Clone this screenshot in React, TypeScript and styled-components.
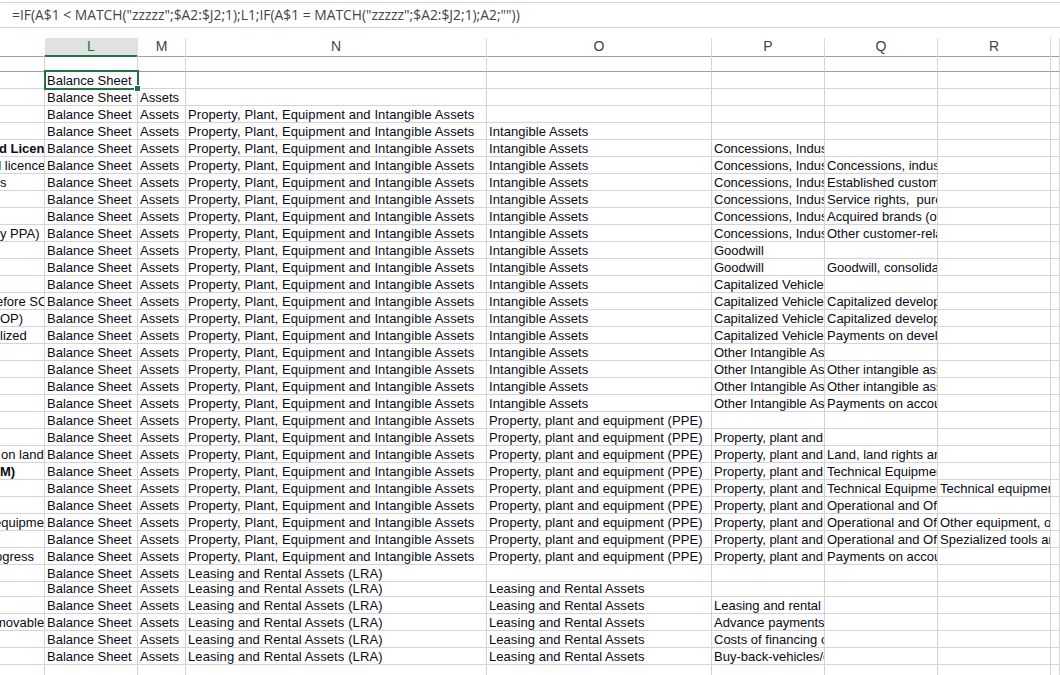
import styled, { createGlobalStyle } from "styled-components";

const COLUMNS = "45px 93px 48px 301px 225px 113px 113px 113px 1fr";

const BS = "Balance Sheet";
const AS = "Assets";
const PPE = "Property, Plant, Equipment and Intangible Assets";
const LRA = "Leasing and Rental Assets (LRA)";
const IA = "Intangible Assets";
const PP = "Property, plant and equipment (PPE)";
const LR = "Leasing and Rental Assets";
const CON = "Concessions, Industrial Rights";
const CAP = "Capitalized Vehicle Development";
const OIA = "Other Intangible Assets";
const PPS = "Property, plant and equipment";
const OPS = "Operational and Office Equipment";
const TEC = "Technical Equipment and Machinery";

interface RowData {
    left?: string;
    shift?: number; // left column text starts outside of the visible part
    bold?: boolean;
    m?: string;
    n?: string;
    o?: string;
    p?: string;
    q?: string;
    r?: string;
    short?: boolean;
}

const rows: RowData[] = [
    {},
    { m: AS },
    { m: AS, n: PPE },
    { m: AS, n: PPE, o: IA },
    { left: "d Licen", shift: -1, bold: true, m: AS, n: PPE, o: IA, p: CON },
    { left: "d licence", shift: -6, m: AS, n: PPE, o: IA, p: CON, q: "Concessions, industrial" },
    { left: "s", shift: 0, m: AS, n: PPE, o: IA, p: CON, q: "Established customer" },
    { m: AS, n: PPE, o: IA, p: CON, q: "Service rights,  purchased" },
    { m: AS, n: PPE, o: IA, p: CON, q: "Acquired brands (other)" },
    { left: "y PPA)", m: AS, n: PPE, o: IA, p: CON, q: "Other customer-related" },
    { m: AS, n: PPE, o: IA, p: "Goodwill" },
    { m: AS, n: PPE, o: IA, p: "Goodwill", q: "Goodwill, consolidated" },
    { m: AS, n: PPE, o: IA, p: CAP },
    { left: "efore SOP", shift: -4, m: AS, n: PPE, o: IA, p: CAP, q: "Capitalized development" },
    { left: "OP)", shift: 0, m: AS, n: PPE, o: IA, p: CAP, q: "Capitalized development" },
    { left: "lized", shift: 0, m: AS, n: PPE, o: IA, p: CAP, q: "Payments on development" },
    { m: AS, n: PPE, o: IA, p: OIA },
    { m: AS, n: PPE, o: IA, p: OIA, q: "Other intangible assets" },
    { m: AS, n: PPE, o: IA, p: OIA, q: "Other intangible assets" },
    { m: AS, n: PPE, o: IA, p: OIA, q: "Payments on account" },
    { m: AS, n: PPE, o: PP },
    { m: AS, n: PPE, o: PP, p: PPS },
    { left: "on land", shift: 1, m: AS, n: PPE, o: PP, p: PPS, q: "Land, land rights and" },
    { left: "M)", bold: true, m: AS, n: PPE, o: PP, p: PPS, q: TEC },
    { m: AS, n: PPE, o: PP, p: PPS, q: TEC, r: "Technical equipment and" },
    { m: AS, n: PPE, o: PP, p: PPS, q: OPS },
    { left: "equipme", shift: -6, m: AS, n: PPE, o: PP, p: PPS, q: OPS, r: "Other equipment, office" },
    { m: AS, n: PPE, o: PP, p: PPS, q: OPS, r: "Spezialized tools and" },
    { left: "ogress", shift: -5, m: AS, n: PPE, o: PP, p: PPS, q: "Payments on account" },
    { m: AS, n: LRA },
    { m: AS, n: LRA, o: LR, short: true },
    { m: AS, n: LRA, o: LR, p: "Leasing and rental" },
    { left: "movable", shift: -5, m: AS, n: LRA, o: LR, p: "Advance payments on" },
    { m: AS, n: LRA, o: LR, p: "Costs of financing of" },
    { m: AS, n: LRA, o: LR, p: "Buy-back-vehicles/other" },
    {},
];

const headers = ["", "L", "M", "N", "O", "P", "Q", "R", ""];

const App = () => {
    return (
        <Sheet>
            <GlobalStyle />
            <FormulaBar>=IF(A$1 &lt; MATCH("zzzzz";$A2:$J2;1);L1;IF(A$1 = MATCH("zzzzz";$A2:$J2;1);A2;""))</FormulaBar>
            <HeaderRow>
                {headers.map((label, index) => (
                    <HeaderCell key={index} $active={label === "L"} $plain={index === 0}>
                        {label}
                    </HeaderCell>
                ))}
            </HeaderRow>
            <FrozenRow>
                {headers.map((_, index) => (
                    <FrozenCell key={index} />
                ))}
            </FrozenRow>
            {rows.map((row, index) => {
                const isLast = index === rows.length - 1;
                return (
                    <Row key={index} $short={row.short}>
                        <LeftCell $bold={row.bold} $shift={row.shift ?? 0}>
                            {row.left}
                        </LeftCell>
                        {index === 0 ? (
                            <SelectedCell>
                                {BS}
                                <FillHandle />
                            </SelectedCell>
                        ) : (
                            <Cell $short={row.short}>{isLast ? "" : BS}</Cell>
                        )}
                        <Cell $short={row.short}>{row.m}</Cell>
                        <Cell $short={row.short} $spread={0.1}>{row.n}</Cell>
                        <Cell $short={row.short} $spread={0.06}>{row.o}</Cell>
                        <Cell>{row.p}</Cell>
                        <Cell>{row.q}</Cell>
                        <Cell>{row.r}</Cell>
                        <Cell />
                    </Row>
                );
            })}
        </Sheet>
    );
};

export default App;

// Styled Components
const GlobalStyle = createGlobalStyle`
    html, body {
        margin: 0;
        padding: 0;
        background: #fff;
        overflow: hidden;
    }
`;

const Sheet = styled.div`
    width: 1060px;
    height: 675px;
    overflow: hidden;
    background: #fff;
    padding-top: 2px;
    box-sizing: border-box;
    font-family: "Liberation Sans", Arial, sans-serif;
    font-size: 13px;
    color: #0a0a14;
`;

const FormulaBar = styled.div`
    height: 26px;
    box-sizing: border-box;
    border-top: 1px solid #d4d4d4;
    border-bottom: 1px solid #d4d4d4;
    margin-bottom: 10px;
    padding-left: 12px;
    line-height: 23px;
    font-family: "Open Sans", sans-serif;
    font-size: 13.85px;
    color: #444;
    white-space: nowrap;
`;

const HeaderRow = styled.div`
    display: grid;
    grid-template-columns: ${COLUMNS};
    height: 17px;
`;

const HeaderCell = styled.div<{ $active?: boolean; $plain?: boolean }>`
    box-sizing: border-box;
    border-right: 1px solid ${({ $active, $plain }) => ($active || $plain ? "transparent" : "#dcdcdc")};
    border-bottom: ${({ $active }) => ($active ? "2px solid #217346" : "1px solid #9f9f9f")};
    background: ${({ $active }) => ($active ? "#e1e1e1" : "#fff")};
    color: ${({ $active }) => ($active ? "#217346" : "#444")};
    text-align: center;
    font-size: 14px;
    line-height: 17px;
`;

const FrozenRow = styled.div`
    display: grid;
    grid-template-columns: ${COLUMNS};
    height: 17px;
`;

const FrozenCell = styled.div`
    box-sizing: border-box;
    border-right: 1px solid #d4d4d4;
    border-bottom: 1px solid #9f9f9f;
`;

const Row = styled.div<{ $short?: boolean }>`
    display: grid;
    grid-template-columns: ${COLUMNS};
    height: ${({ $short }) => ($short ? "15px" : "17px")};
`;

const Cell = styled.div<{ $short?: boolean; $spread?: number }>`
    box-sizing: border-box;
    min-width: 0;
    overflow: hidden;
    white-space: pre;
    padding-left: 2px;
    border-right: 1px solid #d4d4d4;
    border-bottom: 1px solid #d4d4d4;
    letter-spacing: ${({ $spread }) => $spread ?? 0}px;
    line-height: ${({ $short }) => ($short ? "13px" : "17px")};
`;

const LeftCell = styled(Cell)<{ $bold?: boolean; $shift: number }>`
    padding-left: 0;
    text-indent: ${({ $shift }) => $shift}px;
    font-weight: ${({ $bold }) => ($bold ? "bold" : "normal")};
`;

const SelectedCell = styled.div`
    position: relative;
    white-space: pre;
    padding-left: 2px;
    line-height: 17px;
    box-sizing: border-box;

    &::after {
        content: "";
        position: absolute;
        top: -2px;
        left: -1px;
        right: -1px;
        bottom: -1px;
        border: 2px solid #217346;
    }
`;

const FillHandle = styled.span`
    position: absolute;
    z-index: 1;
    right: -3px;
    bottom: -3px;
    width: 5px;
    height: 5px;
    background: #217346;
    border: 1px solid #fff;
    box-sizing: content-box;
`;
